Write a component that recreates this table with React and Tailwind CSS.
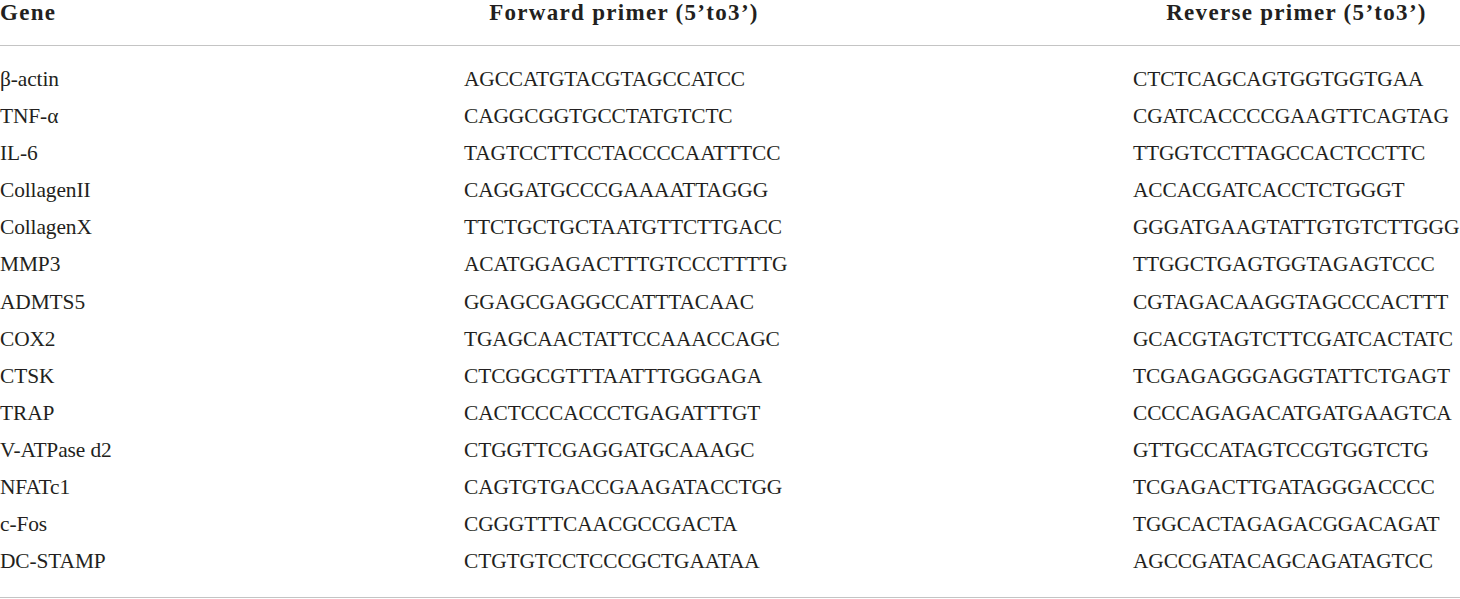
import React from 'react';

const ROWS = [
    ['β-actin', 'AGCCATGTACGTAGCCATCC', 'CTCTCAGCAGTGGTGGTGAA'],
    ['TNF-α', 'CAGGCGGTGCCTATGTCTC', 'CGATCACCCCGAAGTTCAGTAG'],
    ['IL-6', 'TAGTCCTTCCTACCCCAATTTCC', 'TTGGTCCTTAGCCACTCCTTC'],
    ['CollagenII', 'CAGGATGCCCGAAAATTAGGG', 'ACCACGATCACCTCTGGGT'],
    ['CollagenX', 'TTCTGCTGCTAATGTTCTTGACC', 'GGGATGAAGTATTGTGTCTTGGG'],
    ['MMP3', 'ACATGGAGACTTTGTCCCTTTTG', 'TTGGCTGAGTGGTAGAGTCCC'],
    ['ADMTS5', 'GGAGCGAGGCCATTTACAAC', 'CGTAGACAAGGTAGCCCACTTT'],
    ['COX2', 'TGAGCAACTATTCCAAACCAGC', 'GCACGTAGTCTTCGATCACTATC'],
    ['CTSK', 'CTCGGCGTTTAATTTGGGAGA', 'TCGAGAGGGAGGTATTCTGAGT'],
    ['TRAP', 'CACTCCCACCCTGAGATTTGT', 'CCCCAGAGACATGATGAAGTCA'],
    ['V-ATPase d2', 'CTGGTTCGAGGATGCAAAGC', 'GTTGCCATAGTCCGTGGTCTG'],
    ['NFATc1', 'CAGTGTGACCGAAGATACCTGG', 'TCGAGACTTGATAGGGACCCC'],
    ['c-Fos', 'CGGGTTTCAACGCCGACTA', 'TGGCACTAGAGACGGACAGAT'],
    ['DC-STAMP', 'CTGTGTCCTCCCGCTGAATAA', 'AGCCGATACAGCAGATAGTCC'],
];

export default function App() {
    return (
        <div className="w-[1460px] h-[599px] bg-white text-[#231f20] font-['Liberation_Serif',_'Times_New_Roman',_serif] overflow-hidden">
            {/* header */}
            <div className="grid grid-cols-[464px_669px_1fr] h-[46px] border-b-[1.5px] border-[#c4c4c4] text-[23px] font-bold tracking-[1.3px] leading-[26px]">
                <div>Gene</div>
                <div className="w-[320px] text-center whitespace-nowrap">Forward primer (5’to3’)</div>
                <div className="text-center whitespace-nowrap">Reverse primer (5’to3’)</div>
            </div>

            {/* body */}
            <div className="pt-[15px] pb-[17px] border-b-[1.5px] border-[#c4c4c4] text-[21.4px] tracking-[-0.1px]">
                {ROWS.map(([gene, fwd, rev]) => (
                    <div key={gene} className="grid grid-cols-[464px_669px_1fr] h-[37.1px] leading-[37px]">
                        <div className="whitespace-nowrap">{gene}</div>
                        <div className="whitespace-nowrap">{fwd}</div>
                        <div className="whitespace-nowrap">{rev}</div>
                    </div>
                ))}
            </div>
        </div>
    );
}
